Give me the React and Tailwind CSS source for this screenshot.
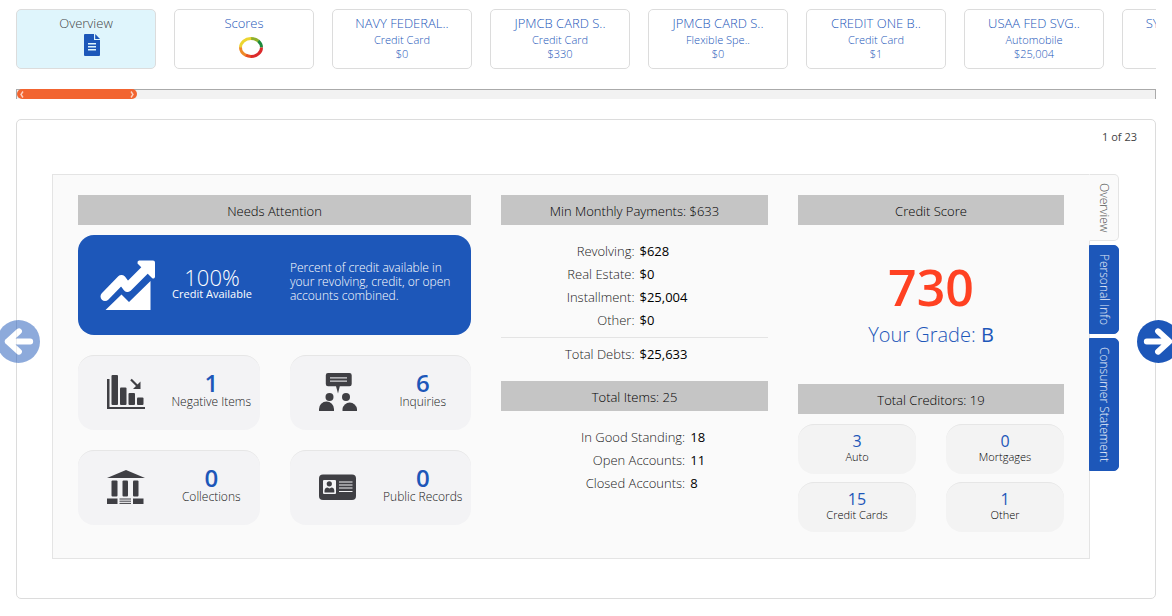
import React, { useState } from "react";

const accounts = [
  { name: "NAVY FEDERAL..", type: "Credit Card", amount: "$0" },
  { name: "JPMCB CARD S..", type: "Credit Card", amount: "$330" },
  { name: "JPMCB CARD S..", type: "Flexible Spe..", amount: "$0" },
  { name: "CREDIT ONE B..", type: "Credit Card", amount: "$1" },
  { name: "USAA FED SVG..", type: "Automobile", amount: "$25,004" },
  { name: "SYNCB/LOWES..", type: "Credit Card", amount: "$0" },
];

const payments = [
  { label: "Revolving:", value: "$628" },
  { label: "Real Estate:", value: "$0" },
  { label: "Installment:", value: "$25,004" },
  { label: "Other:", value: "$0" },
];

const items = [
  { label: "In Good Standing:", value: "18" },
  { label: "Open Accounts:", value: "11" },
  { label: "Closed Accounts:", value: "8" },
];

const creditors = [
  { label: "Auto", value: 3 },
  { label: "Mortgages", value: 0 },
  { label: "Credit Cards", value: 15 },
  { label: "Other", value: 1 },
];

const DocumentIcon = () => (
  <svg width="16" height="22" viewBox="0 0 16 22" fill="#1d57b9">
    <path d="M1 0h9v6h6v15a1 1 0 0 1-1 1H1a1 1 0 0 1-1-1V1a1 1 0 0 1 1-1z" />
    <path d="M11.2 0L16 5H11.2z" />
    <path d="M4 9.7h8M4 12.7h8M4 15.7h8" stroke="#dff5fc" strokeWidth="1.4" />
  </svg>
);

const ScoreRing = () => (
  <svg width="24" height="21" viewBox="0 0 24 21" fill="none" strokeWidth="3">
    <path d="M12 1.5A10.5 9 0 0 1 19.5 4.2" stroke="#8fb02c" />
    <path d="M19.3 4A10.5 9 0 0 1 22.5 10.5" stroke="#1d8a3c" />
    <path d="M1.5 10.5A10.5 9 0 0 1 12.2 1.5" stroke="#ecd531" />
    <path d="M1.5 10.3A10.5 9 0 0 0 7 18.3" stroke="#ee8a26" />
    <path d="M6.8 18.2A10.5 9 0 0 0 12 19.5" stroke="#e8501f" />
    <path d="M11.8 19.5A10.5 9 0 0 0 22.5 10.5" stroke="#dc2a2c" />
  </svg>
);

const GrowthIcon = () => (
  <svg width="56" height="51" viewBox="0 0 56 51" fill="#fff">
    <path d="M5 36.5L21.5 19.5L27.5 27.5L46 9" fill="none" stroke="#fff" strokeWidth="9" strokeLinecap="round" strokeLinejoin="round" />
    <path d="M39 .5H53a2 2 0 0 1 2 2V17q-1 2.5-3 1L37.5 3.5Q37 1 39 .5z" />
    <path d="M5.5 50L21.5 34.5L29 42L50.5 21V50z" />
  </svg>
);

const DeclineIcon = () => (
  <svg width="38" height="38" viewBox="0 0 38 38" fill="#3f3f44">
    <path d="M0 6h2.5v28H38v2H0z" />
    <rect x="4.5" y="2" width="6.5" height="30" rx="1" />
    <rect x="13" y="14.5" width="6.5" height="17.5" rx="1" />
    <rect x="21.5" y="20" width="6.5" height="12" rx="1" />
    <rect x="30" y="24.5" width="6.5" height="7.5" rx="1" />
    <path d="M24 6.5L31 13.5" stroke="#3f3f44" strokeWidth="2.2" />
    <path d="M33.5 8.5V16H26z" />
  </svg>
);

const InquiriesIcon = () => (
  <svg width="38" height="38" viewBox="0 0 38 38" fill="#3f3f44">
    <path d="M9 0H30.5a2.2 2.2 0 0 1 2.2 2.2V11a2.2 2.2 0 0 1-2.2 2.2H20.8L19 20.5L17 13.2H9A2.2 2.2 0 0 1 6.8 11V2.2A2.2 2.2 0 0 1 9 0z" />
    <path d="M11 4.8h17M11 8.2h17" stroke="#d8d8da" strokeWidth="1.2" />
    <circle cx="10.5" cy="24" r="4" />
    <circle cx="27" cy="24" r="4" />
    <path d="M0 38v-2a7.5 7.5 0 0 1 15 0v2z" />
    <path d="M23.5 38v-2a7.3 7.3 0 0 1 14.5 0v2z" />
  </svg>
);

const BankIcon = () => (
  <svg width="38" height="38" viewBox="0 0 38 38" fill="#3f3f44">
    <path d="M19 2L38 10H0z" />
    <rect x="4.5" y="12.5" width="6" height="16" rx="1" />
    <rect x="15.5" y="12.5" width="5.5" height="16" rx="1" />
    <rect x="26" y="12.5" width="5.5" height="16" rx="1" />
    <path d="M0 30.5h10.500V36H0zM26 30.5h10.500V36H26z" />
    <path d="M12.5 31h11.5M12.5 33.2h11.5M12.5 35.4h11.5" stroke="#3f3f44" strokeWidth="1" />
  </svg>
);

const IdCardIcon = () => (
  <svg width="38" height="38" viewBox="0 0 38 38" fill="#3f3f44">
    <rect y="6.5" width="37" height="25.5" rx="4" />
    <rect x="4" y="12" width="13" height="14" rx="1" fill="#f3f3f5" />
    <circle cx="10.3" cy="15.8" r="2.6" />
    <path d="M5.5 24.5v-2q.5-3 3-3l2 1l2-1q2.5 0 2.8 3v2z" />
    <path d="M20 14h13.5M20 17h13.5M20 20h13.5M20 23.5h13.5" stroke="#f3f3f5" strokeWidth="1.2" />
  </svg>
);

const stats = [
  { label: "Negative Items", value: 1, Icon: DeclineIcon },
  { label: "Inquiries", value: 6, Icon: InquiriesIcon },
  { label: "Collections", value: 0, Icon: BankIcon },
  { label: "Public Records", value: 0, Icon: IdCardIcon },
];

const ArrowIcon = ({ flip }) => (
  <svg width="43" height="43" viewBox="0 0 44 44" className={flip ? "rotate-180" : ""}>
    <circle cx="22" cy="22" r="22" fill="#1d57b9" />
    <path d="M10 22H33M21.5 11.5L33 22L21.5 32.5" fill="none" stroke="#fff" strokeWidth="6" strokeLinecap="round" strokeLinejoin="round" />
  </svg>
);

const Heading = ({ children }) => (
  <h2 className="flex h-[30px] items-center justify-center bg-[#c5c5c5] pt-px text-[13px] leading-5 font-light text-black">
    {children}
  </h2>
);

const Row = ({ label, value, wide }) => (
  <div className="flex gap-[5px] text-[13px] leading-[23px]">
    <dt className={wide ? "w-[69%] text-right" : "w-1/2 text-right"}>{label}</dt>
    <dd className="font-normal text-black">{value}</dd>
  </div>
);

const Tab = ({ active, onClick, children }) => (
  <button
    type="button"
    onClick={onClick}
    className={`h-[60px] w-[140px] shrink-0 rounded-[5px] border border-[#dcdcdc] pt-1 pb-[2px] text-center font-light ${
      active ? "bg-[#dff5fc] text-[#444]" : "bg-white text-[#1d57b9]"
    }`}
  >
    {children}
  </button>
);

const sections = ["Overview", "Personal Info", "Consumer Statement"];

const App = () => {
  const [tab, setTab] = useState(0);
  const [section, setSection] = useState("Overview");

  return (
    <div className="overflow-hidden bg-white px-4 pt-[9px] pb-[17px] font-['Open_Sans',sans-serif] font-light text-[#222]">
      {/* Account tabs */}
      <nav className="flex gap-[18px] overflow-hidden">
        <Tab active={tab === 0} onClick={() => setTab(0)}>
          <span className="block text-[13px] leading-[19px]">Overview</span>
          <span className="flex h-[33px] justify-center pt-px pl-3"><DocumentIcon /></span>
        </Tab>
        <Tab active={tab === 1} onClick={() => setTab(1)}>
          <span className="block text-[13px] leading-[19px]">Scores</span>
          <span className="flex h-[33px] justify-center pt-1 pl-[14px]"><ScoreRing /></span>
        </Tab>
        {accounts.map((account, i) => (
          <Tab key={i} active={tab === i + 2} onClick={() => setTab(i + 2)}>
            <span className="block text-[13px] leading-[19px]">{account.name}</span>
            <span className="block text-[11px] leading-[14px]">{account.type}</span>
            <span className="block h-[19px] text-[11px] leading-[14px]">{account.amount}</span>
          </Tab>
        ))}
      </nav>

      {/* Scroll track */}
      <div className="mt-5 h-[10px] border-x border-t border-[#aaa] bg-[#f2f2f2]">
        <div className="-mt-px flex h-[10px] w-[120px] items-center justify-between rounded-[5px] bg-[#f26430] px-[3px]">
          <svg width="4" height="7" viewBox="0 0 4 7" fill="none" stroke="#fbd0c0" strokeWidth="1.4"><path d="M3 .5L1 3.5L3 6.5" /></svg>
          <svg width="4" height="7" viewBox="0 0 4 7" fill="none" stroke="#fbd0c0" strokeWidth="1.4"><path d="M1 .5L3 3.5L1 6.5" /></svg>
        </div>
      </div>

      <main className="relative mt-5 rounded-[5px] border border-[#dcdcdc] pr-9 pb-[39px] pl-[35px]">
        <p className="-mr-[18px] pt-2 pb-[28px] text-right text-[11px] leading-[18px] font-normal text-[#444]">1 of 23</p>

        <div className="flex items-start">
          <div className="grid flex-1 grid-cols-[393fr_267fr_266fr] gap-[30px] border border-[#e4e4e4] bg-[#fafafa] px-[25px] pt-5 pb-[26px]">
            <section>
              <Heading>Needs Attention</Heading>
              <div className="mt-[10px] flex h-[100px] items-center rounded-2xl bg-[#1d57b9] pl-[22px] text-white">
                <GrowthIcon />
                <div className="ml-4 w-20 pb-[2px] text-center">
                  <p className="text-[22px] leading-5">100%</p>
                  <p className="text-[11px] leading-[14px] font-normal whitespace-nowrap">Credit Available</p>
                </div>
                <p className="ml-[38px] flex-1 pr-3 pb-[6px] text-xs leading-[14px]">
                  Percent of credit available in your revolving, credit, or open accounts combined.
                </p>
              </div>
              <div className="mt-5 grid grid-cols-2 gap-x-[30px] gap-y-5">
                {stats.map(({ label, value, Icon }) => (
                  <div key={label} className="flex h-[75px] items-center gap-[18px] rounded-2xl border-t border-[#e6e6e6] bg-[#f3f3f5] pb-[2px] pl-[29px]">
                    <Icon />
                    <div className="flex flex-1 flex-col items-center">
                      <p className="text-2xl leading-5 font-semibold text-[#1d57b9]">{value}</p>
                      <p className="text-xs leading-[18px] whitespace-nowrap">{label}</p>
                    </div>
                  </div>
                ))}
              </div>
            </section>

            <section>
              <Heading>Min Monthly Payments: $633</Heading>
              <dl className="mt-[15px] border-b border-[#e4e4e4] pb-[5px]">
                {payments.map((row) => <Row key={row.label} {...row} />)}
              </dl>
              <dl className="mt-[5px] mb-[15px]">
                <Row label="Total Debts:" value="$25,633" />
              </dl>
              <Heading>Total Items: 25</Heading>
              <dl className="mt-[15px]">
                {items.map((row) => <Row key={row.label} {...row} wide />)}
              </dl>
            </section>

            <section>
              <Heading>Credit Score</Heading>
              <div className="flex h-[159px] flex-col items-center pt-[37px]">
                <p className="text-[50px] leading-[50px] font-semibold text-[#ff4122]">730</p>
                <p className="mt-[9px] text-xl leading-7 text-[#1d57b9]">
                  Your Grade: <span className="font-normal">B</span>
                </p>
              </div>
              <Heading>Total Creditors: 19</Heading>
              <div className="mt-[10px] grid grid-cols-2 gap-x-[30px] gap-y-2">
                {creditors.map((c) => (
                  <div key={c.label} className="h-[50px] rounded-2xl border-t border-[#e6e6e6] bg-[#f3f3f3] pt-2 text-center">
                    <p className="text-base leading-4 font-normal text-[#1d57b9]">{c.value}</p>
                    <p className="text-[11px] leading-4 text-black">{c.label}</p>
                  </div>
                ))}
              </div>
            </section>
          </div>

          {/* Section tabs on the right edge */}
          <div className="-ml-px flex w-[30px] flex-col gap-1">
            {sections.map((name) => (
              <button
                key={name}
                type="button"
                onClick={() => setSection(name)}
                className={`flex w-full items-center justify-center rounded-r-[5px] border pt-2 pb-2 text-xs font-light [writing-mode:vertical-rl] ${
                  section === name
                    ? "border-[#e4e4e4] border-l-[#fafafa] bg-[#fafafa] text-[#555]"
                    : "border-[#1d57b9] bg-[#1d57b9] text-white/90"
                }`}
              >
                {name}
              </button>
            ))}
          </div>
        </div>

        <button type="button" aria-label="Previous" className="absolute top-[200px] -left-5 rounded-full opacity-50">
          <ArrowIcon flip />
        </button>
        <button type="button" aria-label="Next" className="absolute top-[200px] -right-[25px] rounded-full">
          <ArrowIcon />
        </button>
      </main>
    </div>
  );
};

export default App;
